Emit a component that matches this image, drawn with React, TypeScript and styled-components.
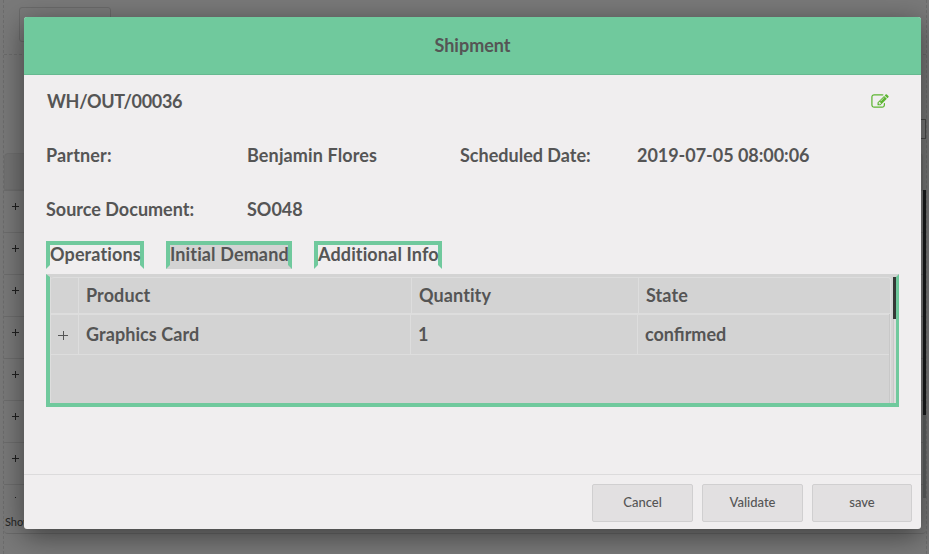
import React from "react";
import styled, { createGlobalStyle } from "styled-components";

const green = "#70c99d";
const ink = "#555555";
const grey = "#d3d3d3";
const rule = "#dddddd";

const GlobalStyle = createGlobalStyle`
  * { box-sizing: border-box; }
  html, body { margin: 0; padding: 0; overflow: hidden; }
  body { font-family: Lato, "Liberation Sans", sans-serif; color: ${ink}; font-variant-ligatures: none; }
`;

const Screen = styled.div`
  position: relative;
  width: 929px;
  height: 554px;
  overflow: hidden;
  background: #797979;
`;

/* Dimmed page behind the dialog */
const Page = styled.div`
  width: 924px;
  height: 554px;
  margin-left: 3px;
  border-left: 1px dashed #6c6c6c;
  border-right: 1px dashed #6c6c6c;
`;

const PageTop = styled.div`
  height: 55px;
  padding: 7px 15px 0;
  border-bottom: 1px dashed #6c6c6c;
`;

const PageSelect = styled.div`
  width: 92px;
  height: 35px;
  border: 1px solid #6a6a6a;
  border-radius: 3px;
`;

const PageFilters = styled.div`
  display: flex;
  justify-content: flex-end;
  height: 98px;
  padding: 64px 0 0;
`;

const PageInput = styled.div`
  width: 120px;
  height: 20px;
  border: 1px solid #4b4b4b;
`;

const PageTable = styled.div`
  display: grid;
  grid-template-columns: 1fr 3px;
  height: 381px;
  border-bottom: 1px solid #6a6a6a;
  border-radius: 4px;
`;

const PageRows = styled.div`
  min-width: 0;
`;

const PageHead = styled.div`
  height: 37px;
  background: #737373;
  border: 1px solid #6f6f6f;
  border-radius: 4px 4px 0 0;
`;

const PageRow = styled.div<{ $clipped?: boolean }>`
  height: ${(p) => (p.$clipped ? 14 : 42)}px;
  padding-left: 8px;
  border-top: 1px solid #6d6d6d;
  font-size: 12px;
  line-height: 29px;
  overflow: hidden;
`;

const PageNote = styled.div`
  height: 35px;
  padding: 10px 0 0 1px;
  font-size: 11px;
  line-height: 28px;
  color: #252525;
`;

const PageTrack = styled.div`
  height: 308px;
  margin-top: 37px;
  background: #606262;
`;

const PageThumb = styled.div`
  height: 225px;
  background: #1b1c1d;
`;

/* Dialog */
const Dimmer = styled.div`
  position: absolute;
  inset: 0;
  padding: 17px 8px 25px 24px;
`;

const Modal = styled.div`
  display: flex;
  flex-direction: column;
  width: 897px;
  height: 512px;
  border-radius: 3px;
  background: #f0eeef;
  box-shadow: 0 7px 28px 0 rgba(0, 0, 0, 0.48);
`;

const ModalHeader = styled.header`
  height: 58px;
  border-bottom: 1px solid #66b990;
  border-radius: 3px 3px 0 0;
  background: ${green};
  text-align: center;
  font-size: 18px;
  font-weight: 700;
  line-height: 57px;
`;

const ModalBody = styled.main`
  flex: 1;
  padding: 0 22px;
  font-size: 18px;
  font-weight: 700;
`;

const TitleRow = styled.div`
  display: flex;
  justify-content: space-between;
  align-items: center;
  height: 53px;
  padding: 0 10px 2px 1px;
`;

const Reference = styled.span`
  letter-spacing: -0.33px;
`;

const Fields = styled.div`
  display: grid;
  grid-template-columns: 201px 213px 177px 1fr;
  grid-auto-rows: 54px;
  align-items: center;
  height: 113px;
  white-space: nowrap;
`;

const FieldText = styled.span<{ $tracking?: number }>`
  letter-spacing: ${(p) => p.$tracking ?? 0}px;
`;

const Tabs = styled.nav`
  display: flex;
  gap: 22px;
  height: 33px;
`;

const Tab = styled.div<{ $width: number; $active?: boolean }>`
  width: ${(p) => p.$width}px;
  height: 28px;
  border: 4px solid ${green};
  border-bottom-color: ${(p) => (p.$active ? grey : "#f0eeef")};
  background: ${(p) => (p.$active ? grey : "transparent")};
  line-height: 19px;
  letter-spacing: 0.13px;
  white-space: nowrap;
`;

const Panel = styled.section`
  display: grid;
  grid-template-columns: 1fr 3px;
  width: 853px;
  height: 133px;
  border: solid ${green};
  border-width: 3px 3px 4px 4px;
  border-top-color: ${grey};
  background: ${grey};
`;

const Table = styled.div`
  display: flex;
  flex-direction: column;
  border-left: 1px solid ${rule};
  padding-right: 2px;
`;

const HeadRow = styled.div`
  display: grid;
  grid-template-columns: 27px 333px 227px 1fr;
  height: 37px;
  border: 1px solid ${rule};
  border-left: 0;
  border-radius: 3px 3px 0 0;
  line-height: 35px;
  letter-spacing: 0.1px;
`;

const BodyRows = styled.div`
  flex: 1;
  margin-right: 1px;
  border-right: 1px solid #c8c8c8;
  box-shadow: 1px 0 0 ${rule};
`;

const BodyRow = styled.div`
  display: grid;
  grid-template-columns: 27px 332px 227px 1fr;
  height: 41px;
  border: 1px solid ${rule};
  border-width: 1px 0;
  line-height: 39px;
  letter-spacing: 0.08px;
`;

const Cell = styled.div<{ $ligatures?: boolean }>`
  padding-left: 7px;
  border-left: 1px solid ${rule};
  ${(p) => p.$ligatures && "font-variant-ligatures: normal; letter-spacing: normal;"}
`;

const Expander = styled.div`
  display: flex;
  align-items: center;
  padding-left: 7px;
`;

const Track = styled.div`
  border-left: 1px solid #c8c8c8;
  background: ${rule};
`;

const Thumb = styled.div`
  width: 3px;
  height: 42px;
  margin-left: -1px;
  background: #353836;
`;

const ModalFooter = styled.footer`
  display: flex;
  justify-content: flex-end;
  gap: 9px;
  height: 55px;
  padding: 9px 9px 0;
  border-top: 1px solid #dcdbdc;
`;

const Button = styled.button<{ $width?: number }>`
  width: ${(p) => p.$width ?? 101}px;
  height: 38px;
  padding: 0 0 2px;
  border: 1px solid #d0cfd0;
  border-radius: 2px;
  background: #e2e0e1;
  color: ${ink};
  font: 500 13px Lato, sans-serif;
`;

const EditIcon = () => (
  <svg width="18" height="18" viewBox="0 -256 1850 1850" aria-label="Edit">
    <g transform="translate(30 1373) scale(1 -1)" fill="#5cb531">
      <path d="M888 352l116 116l-152 152l-116 -116v-56h96v-96h56zM1328 1072q-16 16 -33 -1l-350 -350q-17 -17 -1 -33t33 1l350 350q17 17 1 33zM1408 478v-190q0 -119 -84.5 -203.5t-203.5 -84.5h-832q-119 0 -203.500 84.500t-84.500 203.500v832q0 119 84.500 203.500t203.500 84.500h832q63 0 117 -25q15 -7 18 -23q3 -17 -9 -29l-49 -49q-14 -14 -32 -8q-23 6 -45 6h-832q-66 0 -113 -47t-47 -113v-832q0 -66 47 -113t113 -47h832q66 0 113 47t47 113v126q0 13 9 22l64 64q15 15 35 7t20 -29zM1312 1216l288 -288l-672 -672h-288v288zM1756 1084l-92 -92l-288 288l92 92q28 28 68 28t68 -28l152 -152q28 -28 28 -68t-28 -68z" />
    </g>
  </svg>
);

const PlusIcon = () => (
  <svg width="10" height="10" viewBox="0 0 10 10" stroke={ink} strokeWidth="1" aria-label="Expand">
    <path d="M0 5.500H10M5.500 1V10" />
  </svg>
);

const PagePlus = () => (
  <svg width="7" height="7" viewBox="0 0 7 7" stroke="#202020" strokeWidth="1" aria-hidden="true">
    <path d="M0 3.500H7M3.500 0V7" />
  </svg>
);

export default function App() {
  return (
    <>
      <GlobalStyle />
      <Screen>
        <Page>
          <PageTop>
            <PageSelect />
          </PageTop>
          <PageFilters>
            <PageInput />
          </PageFilters>
          <PageTable>
            <PageRows>
              <PageHead />
              {Array.from({ length: 8 }, (_, i) => (
                <PageRow key={i} $clipped={i === 7}>
                  <PagePlus />
                </PageRow>
              ))}
              <PageNote>Showing</PageNote>
            </PageRows>
            <PageTrack>
              <PageThumb />
            </PageTrack>
          </PageTable>
        </Page>
        <Dimmer>
          <Modal role="dialog">
            <ModalHeader>Shipment</ModalHeader>
            <ModalBody>
              <TitleRow>
                <Reference>WH/OUT/00036</Reference>
                <EditIcon />
              </TitleRow>
              <Fields>
                <FieldText $tracking={0.15}>Partner:</FieldText>
                <FieldText $tracking={0.13}>Benjamin Flores</FieldText>
                <FieldText>Scheduled Date:</FieldText>
                <FieldText $tracking={-0.04}>2019-07-05 08:00:06</FieldText>
                <FieldText>Source Document:</FieldText>
                <FieldText>SO048</FieldText>
              </Fields>
              <Tabs>
                <Tab $width={98}>Operations</Tab>
                <Tab $width={126} $active>
                  Initial Demand
                </Tab>
                <Tab $width={128}>Additional Info</Tab>
              </Tabs>
              <Panel>
                <Table>
                  <HeadRow>
                    <div />
                    <Cell>Product</Cell>
                    <Cell>Quantity</Cell>
                    <Cell>State</Cell>
                  </HeadRow>
                  <BodyRows>
                    <BodyRow>
                      <Expander>
                        <PlusIcon />
                      </Expander>
                      <Cell>Graphics Card</Cell>
                      <Cell>1</Cell>
                      <Cell $ligatures>confirmed</Cell>
                    </BodyRow>
                  </BodyRows>
                </Table>
                <Track>
                  <Thumb />
                </Track>
              </Panel>
            </ModalBody>
            <ModalFooter>
              <Button>Cancel</Button>
              <Button>Validate</Button>
              <Button $width={100}>save</Button>
            </ModalFooter>
          </Modal>
        </Dimmer>
      </Screen>
    </>
  );
}
